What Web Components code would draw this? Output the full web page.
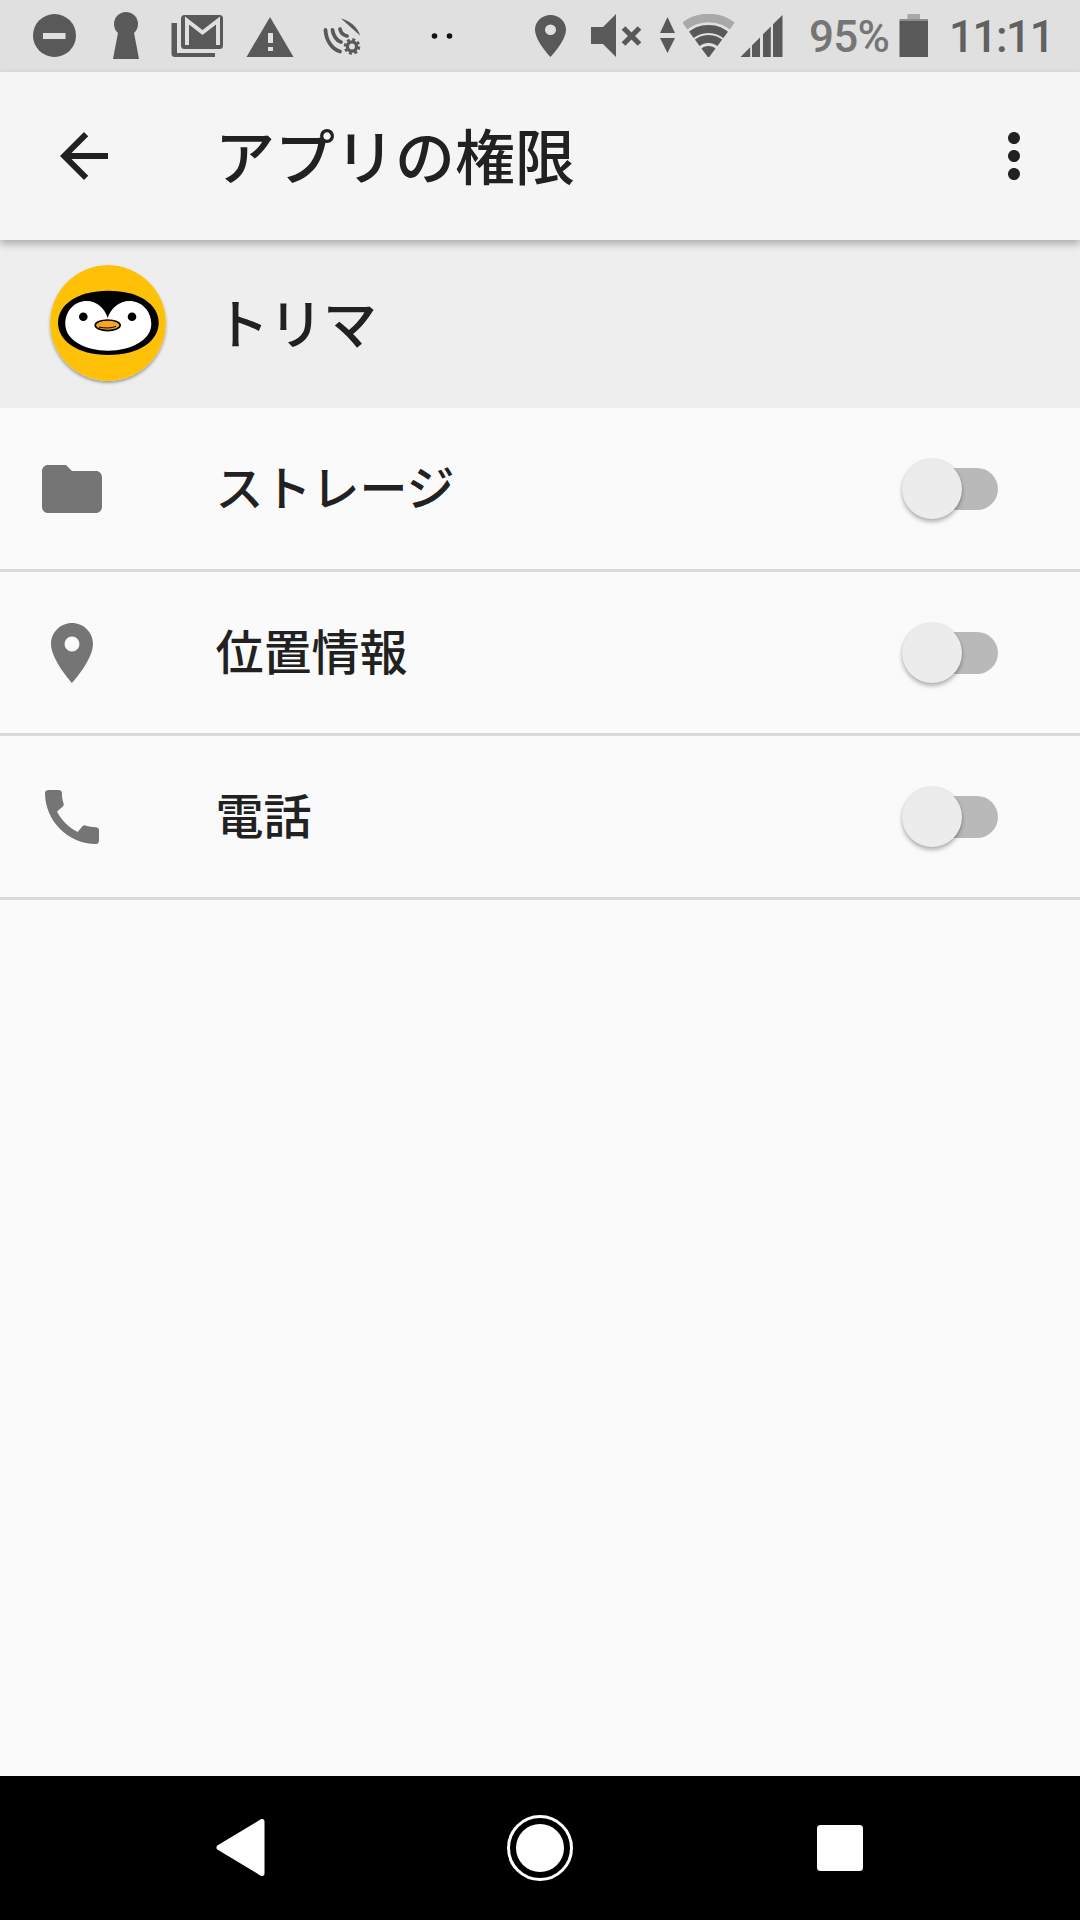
<!DOCTYPE html>
<html lang="ja">
<head>
<meta charset="utf-8">
<title>アプリの権限</title>
<style>
  html, body { margin: 0; padding: 0; height: 100%; }
  body {
    width: 1080px;
    height: 1920px;
    display: flex;
    flex-direction: column;
    background: #fafafa;
    font-family: "Noto Sans CJK JP", "Noto Sans", sans-serif;
    overflow: hidden;
  }
  perm-list { flex: 1; }
</style>
</head>
<body>
<status-bar></status-bar>
<app-bar title="アプリの権限"></app-bar>
<app-header name="トリマ"></app-header>
<perm-list>
  <perm-row label="ストレージ">
    <svg slot="icon" viewBox="0 0 24 24" width="72" height="72"><path d="M10 4H4c-1.1 0-2 .9-2 2v12c0 1.1.9 2 2 2h16c1.1 0 2-.9 2-2V8c0-1.1-.9-2-2-2h-8l-2-2z"/></svg>
  </perm-row>
  <perm-row label="位置情報">
    <svg slot="icon" viewBox="0 0 24 24" width="72" height="72"><path d="M12 2C8.13 2 5 5.13 5 9c0 5.25 7 13 7 13s7-7.75 7-13c0-3.87-3.13-7-7-7zm0 9.5a2.5 2.5 0 0 1 0-5 2.5 2.5 0 0 1 0 5z"/></svg>
  </perm-row>
  <perm-row label="電話">
    <svg slot="icon" viewBox="0 0 24 24" width="72" height="72"><path d="M20.01 15.38c-1.23 0-2.42-.2-3.53-.56-.35-.12-.74-.03-1.01.24l-1.57 1.97c-2.83-1.35-5.48-3.9-6.89-6.83l1.95-1.66c.27-.28.35-.67.24-1.02-.37-1.11-.56-2.3-.56-3.53 0-.54-.45-.99-.99-.99H4.19C3.65 3 3 3.24 3 3.99 3 13.28 10.73 21 20.01 21c.71 0 .99-.63.99-1.18v-3.45c0-.54-.45-.99-.99-.99z"/></svg>
  </perm-row>
</perm-list>
<nav-bar></nav-bar>

<script>
{
  class StatusBar extends HTMLElement {
    constructor() {
      super();
      this.attachShadow({ mode: "open" });
    }

    connectedCallback() {
      // every svg uses page pixels as its viewBox, so the numbers read off the screenshot go in directly
      this.shadowRoot.innerHTML = `
        <style>
          :host {
            display: flex;
            align-items: flex-start;
            height: 72px;
            background: #e0e0e0;
            flex: none;
            font-family: Roboto, sans-serif;
          }
          svg { display: block; flex: none; fill: #595959; }
          .txt { flex: none; height: 72px; line-height: 75px; font-size: 44px; font-weight: 500; white-space: nowrap; }
        </style>

        <svg viewBox="33 14 43 43" width="43" height="43" style="margin:14px 0 0 33px">
          <circle cx="54.5" cy="35.5" r="21.5"/>
          <rect x="43" y="33" width="22.5" height="6" fill="#e0e0e0"/>
        </svg>

        <svg viewBox="113 12 26 47" width="26" height="47" style="margin:12px 0 0 37px">
          <circle cx="126" cy="24" r="12"/>
          <path d="M118.5 30h15L139 59h-26z"/>
        </svg>

        <svg viewBox="171 15 52 42" width="52" height="42" style="margin:15px 0 0 32px">
          <path d="M171.5 23h5.5v30h38v4h-40a3.5 3.5 0 0 1-3.5-3.5z"/>
          <rect x="181" y="15" width="42" height="34" rx="3.5"/>
          <path d="M187 45V20.5l15.5 12 15.500-12V45" fill="none" stroke="#e0e0e0" stroke-width="4"/>
        </svg>

        <svg viewBox="246 17 48 40" width="48" height="40" style="margin:17px 0 0 23px">
          <path d="M270 17l23.5 40h-47z"/>
          <path d="M268 33h5v10h-5zM268 47h5v4h-5z" fill="#e0e0e0"/>
        </svg>

        <svg viewBox="323 17 38 38" width="38" height="38" style="margin:17px 0 0 29px">
          <path d="M341 18.500c9 2 17 9 19 17z"/>
          <g fill="none" stroke="#595959" stroke-width="3.800" stroke-linecap="round">
            <path d="M325.500 30c.5 10 6 19 14.500 21.500"/>
            <path d="M332.500 30c.5 5 4 10.500 8.500 12"/>
            <path d="M340 29c.5 3 3 6 7 7"/>
          </g>
          <circle cx="352" cy="46.500" r="4.600" fill="none" stroke="#595959" stroke-width="3.400"/>
          <circle cx="352" cy="46.500" r="7" fill="none" stroke="#595959" stroke-width="2.600" stroke-dasharray="3 2.500"/>
        </svg>

        <svg viewBox="430 32 24 8" width="24" height="8" style="margin:32px 0 0 69px;fill:#111">
          <circle cx="434.500" cy="36" r="2.800"/>
          <circle cx="449.500" cy="36" r="2.800"/>
        </svg>

        <svg viewBox="5 2 14 20" width="31" height="42" preserveAspectRatio="none" style="margin:15px 0 0 81px">
          <path fill-rule="evenodd" d="M12 2C8.13 2 5 5.13 5 9c0 5.25 7 13 7 13s7-7.75 7-13c0-3.87-3.13-7-7-7zm0 9.5a2.5 2.5 0 0 1 0-5 2.5 2.5 0 0 1 0 5z"/>
        </svg>

        <svg viewBox="591 14 51 43" width="51" height="43" style="margin:14px 0 0 25px">
          <path d="M591 27h12l13-13v43l-13-13h-12z"/>
          <path d="M623.500 28l16 16M639.500 28l-16 16" fill="none" stroke="#595959" stroke-width="5.200"/>
        </svg>

        <svg viewBox="660 17 15 36" width="15" height="36" style="margin:17px 0 0 18px">
          <path d="M667.500 17l7.500 16h-15zM660 38h15l-7.500 15z"/>
        </svg>

        <svg viewBox="683 14 52 43" width="52" height="43" style="margin:14px 0 0 8px">
          <defs>
            <clipPath id="wedge"><path d="M708.500 58L657.500 -11H759.500z"/></clipPath>
          </defs>
          <g clip-path="url(#wedge)" fill="none">
            <circle cx="708.500" cy="57" r="39" stroke="#a9a9a9" stroke-width="8.500"/>
            <circle cx="708.500" cy="57" r="28" stroke="#595959" stroke-width="8"/>
            <circle cx="708.500" cy="57" r="18" stroke="#595959" stroke-width="8"/>
            <circle cx="708.500" cy="57" r="11" fill="#595959"/>
          </g>
        </svg>

        <svg viewBox="740 15 43 42" width="43" height="42" style="margin:15px 0 0 5px">
          <path d="M740.500 57l9.700-9.700V57zM752 45.300l8-7.900V57h-8zM763 34.300l7.800-7.800V57H763zM773 24.300l9.500-9.300v42H773z"/>
        </svg>

        <span class="txt" style="width:89px;margin-left:26px;color:#757575;letter-spacing:-0.8px">95%</span>

        <svg viewBox="898 14 29 43" width="29" height="43" style="margin:14px 0 0 1px">
          <rect x="906.500" y="14" width="12.500" height="5" fill="#a8a8a8"/>
          <rect x="898.500" y="19" width="28.500" height="2" fill="#8c8c8c"/>
          <rect x="898.500" y="21" width="28.500" height="36"/>
        </svg>

        <span class="txt" style="margin-left:21px;color:#616161;letter-spacing:-1.500px">11:11</span>
      `;
    }
  }

  class AppBar extends HTMLElement {
    constructor() {
      super();
      this.attachShadow({ mode: "open" });
    }

    connectedCallback() {
      const title = this.getAttribute("title") || "";

      this.shadowRoot.innerHTML = `
        <style>
          :host {
            display: flex;
            align-items: center;
            flex: none;
            height: 168px;
            padding: 0 30px 0 48px;
            background: #f5f5f5;
            box-shadow: 0 4px 8px rgba(0, 0, 0, 0.28);
            position: relative;
            z-index: 1;
            color: #212121;
          }
          svg { display: block; flex: none; fill: #212121; }
          .title {
            flex: 1;
            margin: 0 0 4px 95px;
            font-size: 60px;
            font-weight: 500;
            line-height: 80px;
            white-space: nowrap;
          }
        </style>
        <svg viewBox="0 0 24 24" width="72" height="72"><path d="M20 11H7.830l5.590-5.590L12 4l-8 8 8 8 1.410-1.410L7.830 13H20v-2z"/></svg>
        <div class="title">${title}</div>
        <svg viewBox="0 0 24 24" width="72" height="72"><path d="M12 8c1.100 0 2-.9 2-2s-.9-2-2-2-2 .9-2 2 .9 2 2 2zm0 2c-1.100 0-2 .9-2 2s.9 2 2 2 2-.9 2-2-.9-2-2-2zm0 6c-1.100 0-2 .9-2 2s.9 2 2 2 2-.9 2-2-.9-2-2-2z"/></svg>
      `;
    }
  }

  class AppHeader extends HTMLElement {
    constructor() {
      super();
      this.attachShadow({ mode: "open" });
    }

    connectedCallback() {
      const name = this.getAttribute("name") || "";

      this.shadowRoot.innerHTML = `
        <style>
          :host {
            display: flex;
            align-items: center;
            flex: none;
            height: 168px;
            padding-left: 50px;
            background: #eeeeee;
            color: #212121;
          }
          .logo {
            flex: none;
            display: block;
            width: 116px;
            height: 116px;
            margin-top: -3px;
            border-radius: 50%;
            box-shadow: 0 2px 3px rgba(0, 0, 0, 0.35);
          }
          .name {
            margin: 0 0 4px 49px;
            font-size: 54px;
            font-weight: 500;
            line-height: 72px;
            white-space: nowrap;
          }
        </style>
        <svg class="logo" viewBox="0 0 116 116">
          <circle cx="58" cy="58" r="58" fill="#ffc107"/>
          <path d="M58.400 25.700C90 25.700 108.700 40 108.700 57.800S90 90 58.400 90 8 75.600 8 57.800 27 25.700 58.400 25.700z" fill="#000"/>
          <path d="M57.700 53C55 43 46 36 37 36 24 36 15.300 46 15.300 59c0 16 19.700 26.700 42.700 26.700S101.300 75 101.300 59C101.300 46 92 36 79 36 70 36 60.500 43 57.700 53z" fill="#fff"/>
          <circle cx="33.300" cy="51.700" r="4.300" fill="#000"/>
          <circle cx="82" cy="51.700" r="4.300" fill="#000"/>
          <ellipse cx="57.700" cy="60.300" rx="12.500" ry="5.300" fill="#f5a623" stroke="#000" stroke-width="1.600"/>
          <path d="M49 62c6 1.400 12 1.400 17-.6" fill="none" stroke="#000" stroke-width="1"/>
        </svg>
        <div class="name">${name}</div>
      `;
    }
  }

  class PermList extends HTMLElement {
    constructor() {
      super();
      this.attachShadow({ mode: "open" });
      this.shadowRoot.innerHTML = `
        <style>
          :host { display: flex; flex-direction: column; background: #fafafa; }
        </style>
        <slot></slot>
      `;
    }
  }

  class PermRow extends HTMLElement {
    constructor() {
      super();
      this.attachShadow({ mode: "open" });
    }

    connectedCallback() {
      const label = this.getAttribute("label") || "";

      this.shadowRoot.innerHTML = `
        <style>
          :host {
            display: flex;
            align-items: center;
            box-sizing: border-box;
            height: 164px;
            padding: 0 82px 0 36px;
            border-bottom: 3px solid #d9d9d9;
            color: #212121;
          }
          ::slotted(svg) { display: block; flex: none; fill: #757575; }
          .label {
            flex: 1;
            margin: 0 0 7px 107.500px;
            font-size: 48px;
            font-weight: 500;
            line-height: 64px;
            white-space: nowrap;
          }
        </style>
        <slot name="icon"></slot>
        <div class="label">${label}</div>
        <toggle-switch></toggle-switch>
      `;
    }
  }

  class ToggleSwitch extends HTMLElement {
    constructor() {
      super();
      this.attachShadow({ mode: "open" });
      this.shadowRoot.innerHTML = `
        <style>
          :host {
            display: flex;
            align-items: center;
            flex: none;
            position: relative;
            width: 96px;
            height: 60px;
          }
          .track {
            width: 84px;
            height: 42px;
            margin-left: 12px;
            border-radius: 21px;
            background: #b9b9b9;
          }
          .thumb {
            position: absolute;
            left: 0;
            top: 0;
            width: 60px;
            height: 60px;
            border-radius: 50%;
            background: #ececec;
            box-shadow: 0 3px 4px rgba(0, 0, 0, 0.28), 0 0 2px rgba(0, 0, 0, 0.12);
          }
        </style>
        <div class="track"></div>
        <div class="thumb"></div>
      `;
    }
  }

  class NavBar extends HTMLElement {
    constructor() {
      super();
      this.attachShadow({ mode: "open" });
      this.shadowRoot.innerHTML = `
        <style>
          :host {
            display: flex;
            align-items: center;
            flex: none;
            height: 144px;
            background: #000;
          }
          svg { display: block; flex: none; }
        </style>
        <svg viewBox="216 1819 49 58" width="49" height="58" style="margin-left:216px">
          <path d="M219 1847.500L262 1821.500V1873.500z" fill="#fff" stroke="#fff" stroke-width="5" stroke-linejoin="round"/>
        </svg>
        <svg viewBox="0 0 66 66" width="66" height="66" style="margin-left:242px">
          <circle cx="33" cy="33" r="31.500" fill="none" stroke="#fff" stroke-width="3"/>
          <circle cx="33" cy="33" r="24" fill="#fff"/>
        </svg>
        <svg viewBox="0 0 46 46" width="46" height="46" style="margin-left:244px">
          <rect width="46" height="46" rx="3.500" fill="#fff"/>
        </svg>
      `;
    }
  }

  customElements.define("status-bar", StatusBar);
  customElements.define("app-bar", AppBar);
  customElements.define("app-header", AppHeader);
  customElements.define("perm-list", PermList);
  customElements.define("perm-row", PermRow);
  customElements.define("toggle-switch", ToggleSwitch);
  customElements.define("nav-bar", NavBar);
}
</script>
</body>
</html>
